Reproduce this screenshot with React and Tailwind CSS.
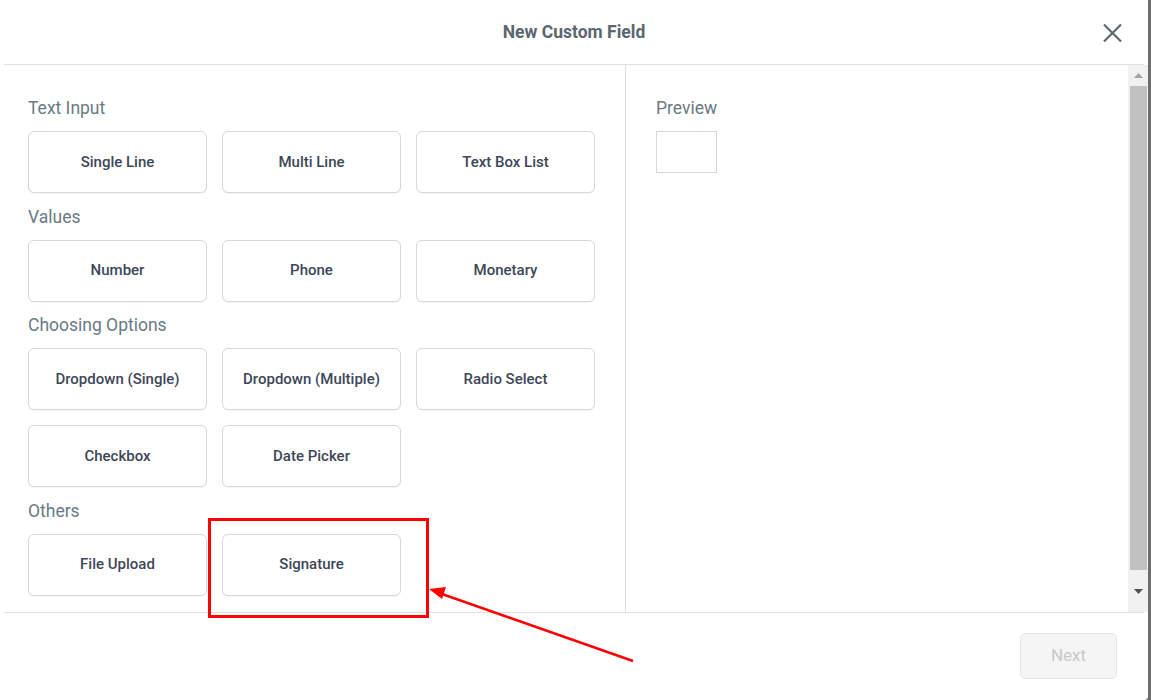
import React from 'react';

const sections = [
  { title: 'Text Input', items: ['Single Line', 'Multi Line', 'Text Box List'] },
  { title: 'Values', items: ['Number', 'Phone', 'Monetary'] },
  { title: 'Choosing Options', items: ['Dropdown (Single)', 'Dropdown (Multiple)', 'Radio Select', 'Checkbox', 'Date Picker'] },
  { title: 'Others', items: ['File Upload', 'Signature'] },
];

const FieldBtn = ({ label }) => (
  <button className="h-[62px] w-[179px] rounded-[6px] border border-[#d3d8df] bg-white text-[15px] font-medium text-[#3e4759] shadow-[0_1px_1px_rgba(0,0,0,0.04)]">
    {label}
  </button>
);

const Scrollbar = () => (
  <div className="flex h-full w-[20px] flex-col bg-[#f1f1f1]">
    <div className="flex h-[21px] w-full items-center justify-center">
      <svg width="9" height="5" viewBox="0 0 9 5"><path d="M4.5 0L9 5H0z" fill="#a3a3a3" /></svg>
    </div>
    <div className="ml-[2px] h-[484px] w-[17px] bg-[#c1c1c1]" />
    <div className="flex w-full flex-1 items-center justify-center">
      <svg width="9" height="5" viewBox="0 0 9 5"><path d="M0 0H9L4.5 5z" fill="#505050" /></svg>
    </div>
  </div>
);

export default function App() {
  return (
    <div className="relative flex h-[700px] w-[1151px] overflow-hidden bg-[#6e6e6e]" style={{ fontFamily: 'Roboto, "Noto Sans", sans-serif' }}>
      <div className="flex h-[700px] w-[1148px] flex-col rounded-br-[4px] bg-white">
        {/* header */}
        <div className="relative flex h-[64px] items-center justify-center">
          <h1 className="text-[17.5px] font-bold text-[#5b6770]">New Custom Field</h1>
          <button className="absolute right-[25px] top-[23px]">
            <svg width="21" height="20" viewBox="0 0 21 20">
              <path d="M2 1.5L19 18.5M19 1.5L2 18.5" stroke="#5b6a74" strokeWidth="2.2" />
            </svg>
          </button>
        </div>
        <div className="mx-[4px] h-px bg-[#dde1e6]" />

        {/* body */}
        <div className="flex h-[547px]">
          <div className="w-[626px] border-r border-[#dde1e6] pl-[28px] pt-[31px]">
            {sections.map((s, i) => (
              <div key={s.title} className={i > 0 ? 'mt-[11.5px]' : ''}>
                <div className="text-[17.5px] leading-[24px] text-[#6a7a85]">{s.title}</div>
                <div className="mt-[11px] grid grid-cols-[179px_179px_179px] gap-x-[15px] gap-y-[15px]">
                  {s.items.map((it) => (
                    <FieldBtn key={it} label={it} />
                  ))}
                </div>
              </div>
            ))}
          </div>
          <div className="flex-1 pl-[30px] pt-[31px]">
            <div className="text-[17.5px] leading-[24px] text-[#6a7a85]">Preview</div>
            <div className="mt-[11px] h-[42px] w-[61px] border border-[#d3d8df]" />
          </div>
          <Scrollbar />
        </div>
        <div className="mx-[4px] h-px bg-[#dde1e6]" />

        {/* footer */}
        <div className="flex flex-1 items-start justify-end pr-[31px] pt-[20px]">
          <button className="h-[46px] w-[97px] rounded-[5px] border border-[#e6e6e6] bg-[#f5f5f5] text-[17px] text-[#c8c8c8]">
            Next
          </button>
        </div>
      </div>

      {/* annotation */}
      <svg className="pointer-events-none absolute left-0 top-0" width="1151" height="700">
        <rect x="209.5" y="519.5" width="218" height="97" fill="none" stroke="#ff0000" strokeWidth="3" />
        <line x1="633" y1="661" x2="442" y2="594" stroke="#ff0000" strokeWidth="2.5" />
        <path d="M429 589L446 587L442 599z" fill="#ff0000" />
      </svg>
    </div>
  );
}
